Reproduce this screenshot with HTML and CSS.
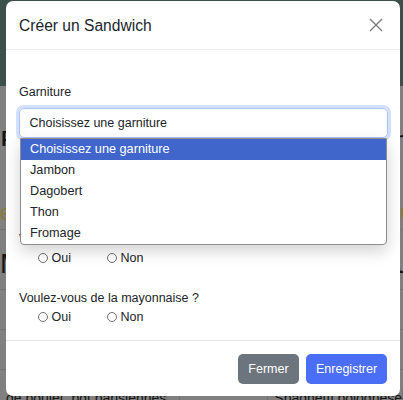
FILE: index.html
```html
<!DOCTYPE html>
<html lang="fr">

<head>
    <meta charset="UTF-8">
    <meta name="viewport" content="width=device-width, initial-scale=1.0">
    <title>Sandwichs</title>
    <link rel="stylesheet" href="styles.css">
</head>

<body>
    <!-- page behind the dimmed backdrop -->
    <div class="page">
        <div class="topbar"></div>
        <div class="content">
            <h1 class="page-title">Entrées et garnitures du jour, menu de la semaine</h1>
            <div class="row yellow">entrées, légumes, desserts et boissons du jour</div>
            <div class="row big">Menu de la semaine, plats du jour et desserts</div>
            <div class="row"></div>
            <div class="row"></div>
            <div class="row last">
                <span class="cell wide">de poulet, pdt parisiennes</span>
                <span class="cell narrow"></span>
                <span class="cell mid"></span>
                <span class="cell">Spaghetti bolognese</span>
            </div>
        </div>
    </div>

    <div class="modal">
        <div class="modal-header">
            <h5 class="modal-title">Créer un Sandwich</h5>
            <button class="btn-close" type="button" aria-label="Close">
                <svg width="14" height="14" viewBox="0 0 14 14">
                    <path d="M1 1 L13 13 M13 1 L1 13" stroke="#7b7b7b" stroke-width="1.4" fill="none" />
                </svg>
            </button>
        </div>
        <div class="modal-body">
            <div class="group first">
                <label class="form-label">Garniture</label>
                <div class="select-wrap">
                    <div class="form-select">Choisissez une garniture</div>
                    <ul class="options">
                        <li class="selected">Choisissez une garniture</li>
                        <li>Jambon</li>
                        <li>Dagobert</li>
                        <li>Thon</li>
                        <li>Fromage</li>
                    </ul>
                </div>
            </div>
            <div class="group crudites">
                <label class="form-label">Voulez-vous des crudités ?</label>
                <div class="radios">
                    <span class="radio"><span class="dot"></span>Oui</span>
                    <span class="radio"><span class="dot"></span>Non</span>
                </div>
            </div>
            <div class="group mayo">
                <label class="form-label">Voulez-vous de la mayonnaise ?</label>
                <div class="radios">
                    <span class="radio"><span class="dot"></span>Oui</span>
                    <span class="radio"><span class="dot"></span>Non</span>
                </div>
            </div>
        </div>
        <div class="modal-footer">
            <button class="btn btn-secondary" type="button">Fermer</button>
            <button class="btn btn-primary" type="button">Enregistrer</button>
        </div>
    </div>
</body>

</html>
```

FILE: styles.css
```css
html,
body {
    width: 100%;
    height: 100%;
    padding: 0;
    margin: 0;
    overflow: hidden;
    font-family: "Liberation Sans", Arial, sans-serif;
    color: #212529;
}

/* background page, already dimmed */
.page {
    height: 100%;
    background-color: #808080;
}

.topbar {
    height: 86px;
    background-color: #3b4f4b;
}

.content {
    color: #141414;
}

.page-title {
    margin: 0;
    padding: 38px 0 0 0;
    height: 60px;
    font-size: 30px;
    font-weight: 400;
    white-space: nowrap;
    overflow: hidden;
    box-sizing: border-box;
}

.row {
    height: 40px;
    border-bottom: 1px solid #737373;
    box-sizing: border-box;
    white-space: nowrap;
    overflow: hidden;
}

.row.yellow {
    height: 84px;
    padding-top: 54px;
    color: #8a7a3a;
    font-size: 22px;
}

.row.big {
    height: 60px;
    padding-top: 18px;
    font-size: 28px;
}

.row.last {
    display: flex;
    border-bottom: none;
    font-size: 14px;
    padding-top: 20px;
    height: 50px;
}

.cell {
    border-right: 1px solid #737373;
    padding-left: 6px;
}

.cell.wide {
    width: 169px;
}

.cell.narrow {
    width: 6px;
}

.cell.mid {
    width: 94px;
}

/* modal */
.modal {
    position: absolute;
    top: 1px;
    left: 6px;
    width: 394px;
    height: 395px;
    background-color: #fff;
    border-radius: 7px;
    display: flex;
    flex-direction: column;
}

.modal-header {
    display: flex;
    align-items: center;
    justify-content: space-between;
    padding: 12.5px 12.5px 12.5px 13px;
    border-bottom: 1px solid #e9ecef;
}

.modal-title {
    margin: 0;
    font-size: 15.6px;
    font-weight: 400;
    line-height: 23.4px;
}

.btn-close {
    border: none;
    background: none;
    padding: 0;
    margin-right: 5px;
    width: 14px;
    height: 14px;
    display: flex;
}

.modal-body {
    padding: 12.5px 12.5px 14px 12.5px;
    font-size: 12.5px;
    line-height: 18.75px;
}

.group.first {
    margin-top: 20px;
}

.group.crudites {
    margin-top: 92px;
}

.group.mayo {
    margin-top: 21.5px;
}

.form-label {
    display: block;
    padding-left: 0.5px;
}

.group.first .form-label {
    margin-bottom: 6.5px;
}

.select-wrap {
    position: relative;
}

.form-select {
    height: 29.6px;
    box-sizing: border-box;
    border: 1px solid #a9c4f5;
    border-radius: 5px;
    box-shadow: 0 0 0 3px #d4e0fb;
    padding: 4.5px 10px;
    line-height: 18.75px;
}

.options {
    position: absolute;
    top: 29.5px;
    left: 1.5px;
    right: 0.5px;
    margin: 0;
    padding: 0;
    list-style: none;
    background-color: #fff;
    border: 1px solid #8d8d8d;
    border-radius: 0 0 4px 4px;
    box-shadow: 0 6px 16px rgba(0, 0, 0, 0.18);
    z-index: 2;
}

.options li {
    height: 21px;
    line-height: 21px;
    padding-left: 9px;
    font-size: 12.7px;
}

.options li.selected {
    background-color: #4066cc;
    color: #fff;
}

.radios {
    display: flex;
    padding-left: 19px;
}

.radio {
    display: flex;
    align-items: center;
    width: 69px;
}

.dot {
    width: 8px;
    height: 8px;
    border: 1px solid #707070;
    border-radius: 50%;
    margin-right: 4px;
}

.modal-footer {
    margin-top: auto;
    border-top: 1px solid #e3e6e9;
    padding: 13px 13px 12.4px 13px;
    display: flex;
    justify-content: flex-end;
    gap: 7px;
}

.btn {
    height: 29.6px;
    border: none;
    border-radius: 5px;
    padding: 0 10px;
    font-family: "Liberation Sans", Arial, sans-serif;
    font-size: 12.5px;
    color: #fff;
}

.btn-secondary {
    background-color: #6c757d;
    width: 61px;
}

.btn-primary {
    background-color: #4a6ef5;
    width: 81px;
}
```
